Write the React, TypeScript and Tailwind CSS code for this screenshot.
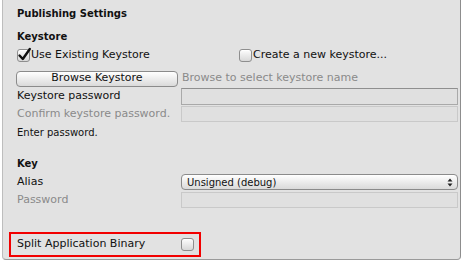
const Checkbox = ({ checked = false }: { checked?: boolean }) => (
  <div className="relative w-[13px] h-[13px] rounded-[3px] border border-[#8e8e8e] bg-gradient-to-b from-[#fdfdfd] to-[#d8d8d8] shadow-[inset_0_1px_0_#ffffff]">
    {checked && (
      <svg className="absolute -left-[1px] -top-[3px]" width="15" height="15" viewBox="0 0 15 15">
        <path d="M2.5 8.5 L5.8 12 L12.8 2" fill="none" stroke="#111" strokeWidth="2.4" strokeLinecap="round" strokeLinejoin="round" />
      </svg>
    )}
  </div>
);

const Field = ({ disabled = false }: { disabled?: boolean }) => (
  <div
    className={
      disabled
        ? "flex-1 h-[16px] border border-[#c9c9c9] bg-[#e0e0e0]"
        : "flex-1 h-[17px] border border-[#a9a9a9] border-t-[#8f8f8f] bg-[#e0e0e0]"
    }
  />
);

export default function App() {
  return (
    <div className="w-[462px] h-[264px] bg-white text-[11px] text-[#111] font-['DejaVu_Sans',sans-serif]">
      <div className="ml-[2px] w-[459px] h-[260px] bg-[#e2e2e2] border-l border-r border-b border-l-[#bdbdbd] border-r-[#8d8d8d] border-b-[#9a9a9a] rounded-b-[4px] pl-[14px] pr-[2px]">
        <div className="pt-[5px] h-[21px] flex items-center font-bold text-[10px]">Publishing Settings</div>

        <div className="mt-[7px] h-[16px] flex items-center font-bold text-[10px]">Keystore</div>

        <div className="mt-[2px] h-[18px] flex items-center">
          <div className="w-[222px] flex items-center gap-[1px]">
            <Checkbox checked />
            <span>Use Existing Keystore</span>
          </div>
          <div className="flex items-center gap-[1px]">
            <Checkbox />
            <span>Create a new keystore...</span>
          </div>
        </div>

        <div className="mt-[6px] h-[17px] flex items-center">
          <button className="w-[162px] -ml-[1px] h-[16px] rounded-[4px] border border-[#8b8b8b] bg-gradient-to-b from-[#ffffff] to-[#dadada] flex items-center justify-center text-[11px]">
            Browse Keystore
          </button>
          <span className="ml-[4px] text-[#8a8a8a]">Browse to select keystore name</span>
        </div>

        <div className="h-[18px] flex items-center">
          <span className="w-[164px] shrink-0">Keystore password</span>
          <Field />
        </div>
        <div className="h-[18px] flex items-center">
          <span className="w-[164px] shrink-0 text-[#8a8a8a]">Confirm keystore password.</span>
          <Field disabled />
        </div>
        <div className="h-[18px] flex items-center text-[10px]">Enter password.</div>

        <div className="mt-[14px] h-[16px] flex items-center font-bold text-[10px]">Key</div>

        <div className="mt-[2px] h-[18px] flex items-center">
          <span className="w-[164px] shrink-0">Alias</span>
          <div className="flex-1 h-[16px] rounded-[4px] border border-[#8b8b8b] bg-gradient-to-b from-[#ffffff] to-[#dadada] flex items-center justify-between pl-[5px] pr-[4px] text-[10px]">
            <span>Unsigned (debug)</span>
            <svg width="6" height="9" viewBox="0 0 6 9">
              <path d="M0.5 3.5 L3 0.5 L5.5 3.5 Z M0.5 5.5 L3 8.5 L5.5 5.5 Z" fill="#222" />
            </svg>
          </div>
        </div>
        <div className="h-[18px] flex items-center">
          <span className="w-[164px] shrink-0 text-[#8a8a8a]">Password</span>
          <Field disabled />
        </div>

        <div className="mt-[23px] -ml-[8px] w-[192px] h-[25px] border-2 border-[#f20000] flex items-center pl-[6px]">
          <span className="w-[164px] shrink-0">Split Application Binary</span>
          <Checkbox />
        </div>
      </div>
    </div>
  );
}
